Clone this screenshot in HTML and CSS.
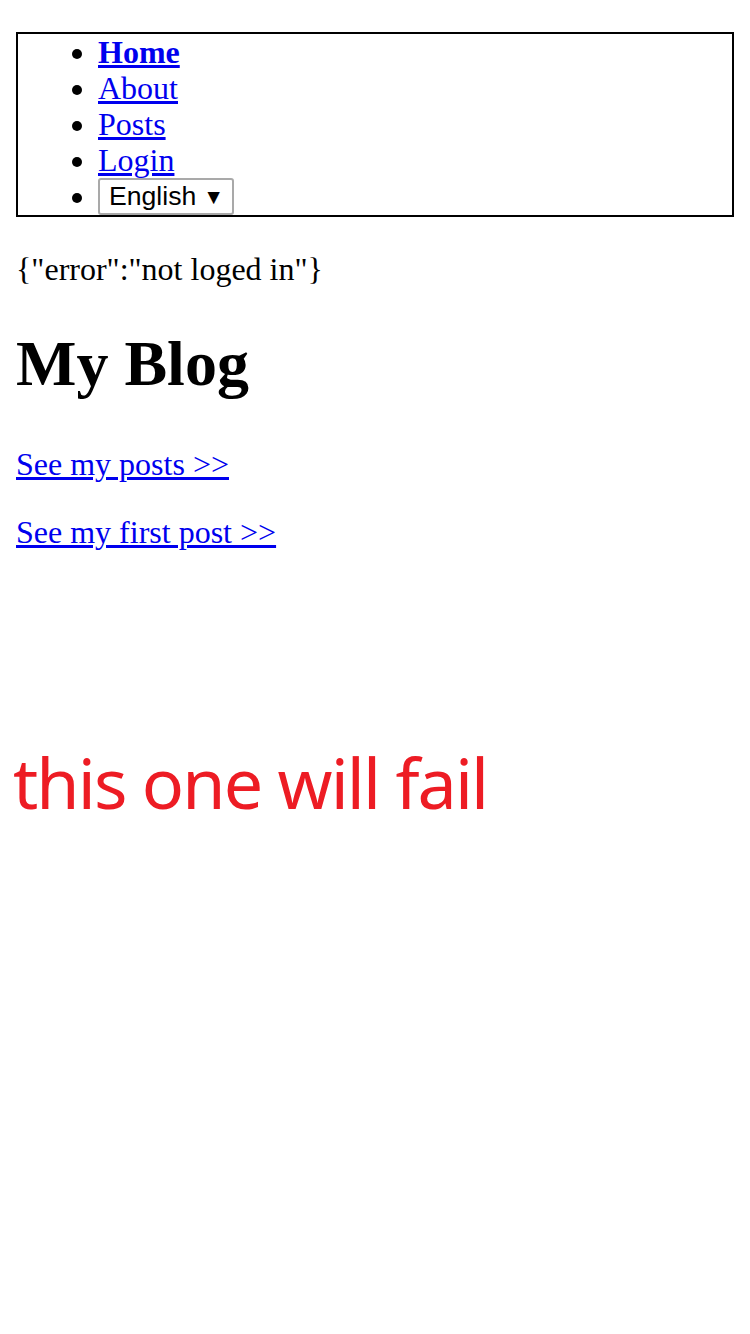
FILE: index.html
```html
<!DOCTYPE html>
<html lang="en">
<head>
<meta charset="utf-8">
<title>My Blog</title>
<link rel="stylesheet" href="styles.css">
</head>
<body>
<ul class="nav">
  <li><a href="#" class="active">Home</a></li>
  <li><a href="#">About</a></li>
  <li><a href="#">Posts</a></li>
  <li><a href="#">Login</a></li>
  <li><span class="select">English <span class="arrow">▼</span></span></li>
</ul>
<p class="text">{"error":"not loged in"}</p>
<h1 class="title">My Blog</h1>
<p class="text"><a href="#">See my posts &gt;&gt;</a></p>
<p class="text"><a href="#">See my first post &gt;&gt;</a></p>
<div class="fail">this one will fail</div>
</body>
</html>
```
FILE: styles.css
```css
html, body {
  background: #fff;
}
body {
  margin: 0;
  padding: 16px;
  font-family: "Liberation Serif", "Times New Roman", serif;
  font-size: 32px;
  line-height: 36px;
  color: #000;
}
a {
  color: #0000ee;
  text-decoration: underline;
}
.nav {
  margin: 16px 0 34px;
  padding: 0 0 1px 80px;
  border: 2px solid #000;
  list-style: disc;
}
.nav li {
  height: 36px;
}
.active {
  font-weight: bold;
}
.select {
  display: inline-flex;
  align-items: center;
  gap: 7px;
  box-sizing: border-box;
  width: 136px;
  height: 37px;
  padding: 0 8px 0 9px;
  border: 2px solid #a9a9a9;
  border-radius: 3px;
  font-family: "Liberation Sans", Arial, sans-serif;
  font-size: 26.6px;
  line-height: 33px;
  color: #000;
  vertical-align: top;
}
.arrow {
  font-size: 21px;
}
.text {
  margin: 32px 0;
}
.title {
  margin: 40px 0 45px;
  font-size: 64px;
  line-height: 74px;
  font-weight: bold;
}
.fail {
  margin: 182px 0 0 -3px;
  font-family: "Noto Sans", "Open Sans", sans-serif;
  font-size: 70px;
  letter-spacing: -1.9px;
  line-height: 100px;
  color: #ed1c24;
}
```
